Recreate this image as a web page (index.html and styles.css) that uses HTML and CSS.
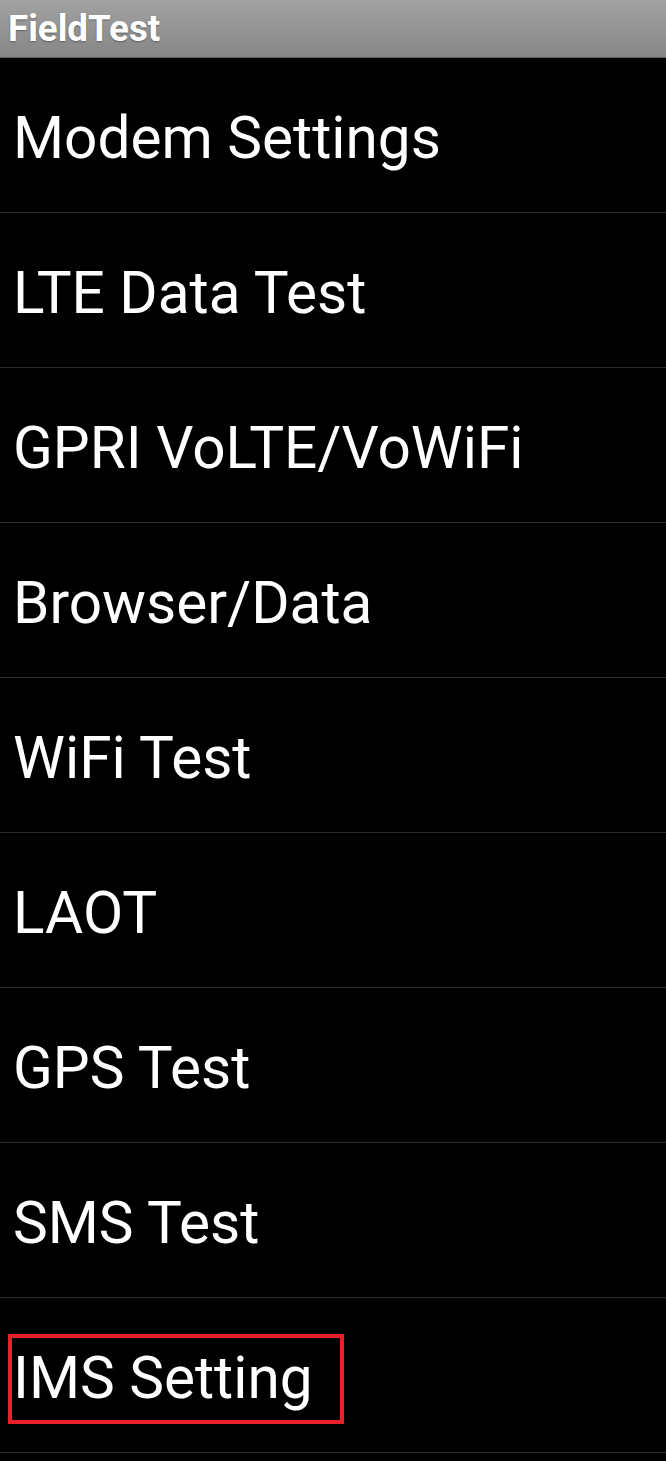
FILE: index.html
```html
<!DOCTYPE html>
<html lang="en">
<head>
  <meta charset="UTF-8">
  <title>FieldTest</title>
  <link rel="stylesheet" href="styles.css">
</head>
<body>
  <!-- Barra de título -->
  <div class="barra-titulo">FieldTest</div>

  <!-- Lista de opciones -->
  <ul class="lista">
    <li class="opcion">Modem Settings</li>
    <li class="opcion">LTE Data Test</li>
    <li class="opcion">GPRI VoLTE/VoWiFi</li>
    <li class="opcion">Browser/Data</li>
    <li class="opcion">WiFi Test</li>
    <li class="opcion">LAOT</li>
    <li class="opcion">GPS Test</li>
    <li class="opcion">SMS Test</li>
    <li class="opcion marcada">IMS Setting<span class="recuadro"></span></li>
  </ul>
</body>
</html>
```

FILE: styles.css
```css
/* Reset básico */
* {
  margin: 0;
  padding: 0;
  box-sizing: border-box;
}
body {
  font-family: Roboto, "Liberation Sans", sans-serif;
  background-color: #000;
  color: #fff;
  width: 666px;
  height: 1461px;
  overflow: hidden;
}
/* Barra superior gris con el nombre de la app */
.barra-titulo {
  height: 58px;
  padding: 1px 0 0 8px;
  line-height: 56px;
  font-size: 36.7px;
  font-weight: bold;
  background: linear-gradient(#a2a2a2, #868686);
  border-bottom: 1px solid #5e5e5e;
  text-shadow: 0 1px 2px rgba(0, 0, 0, 0.35);
}
.lista {
  list-style: none;
}
.opcion {
  position: relative;
  height: 155px;
  padding: 6px 0 0 13px;
  line-height: 148px;
  font-size: 58.5px;
  border-bottom: 1px solid #2b2b2b;
  white-space: nowrap;
}
/* Recuadro rojo que resalta la opción */
.recuadro {
  position: absolute;
  left: 8px;
  top: 36px;
  width: 336px;
  height: 90px;
  border: 4px solid #e8202a;
}
```
